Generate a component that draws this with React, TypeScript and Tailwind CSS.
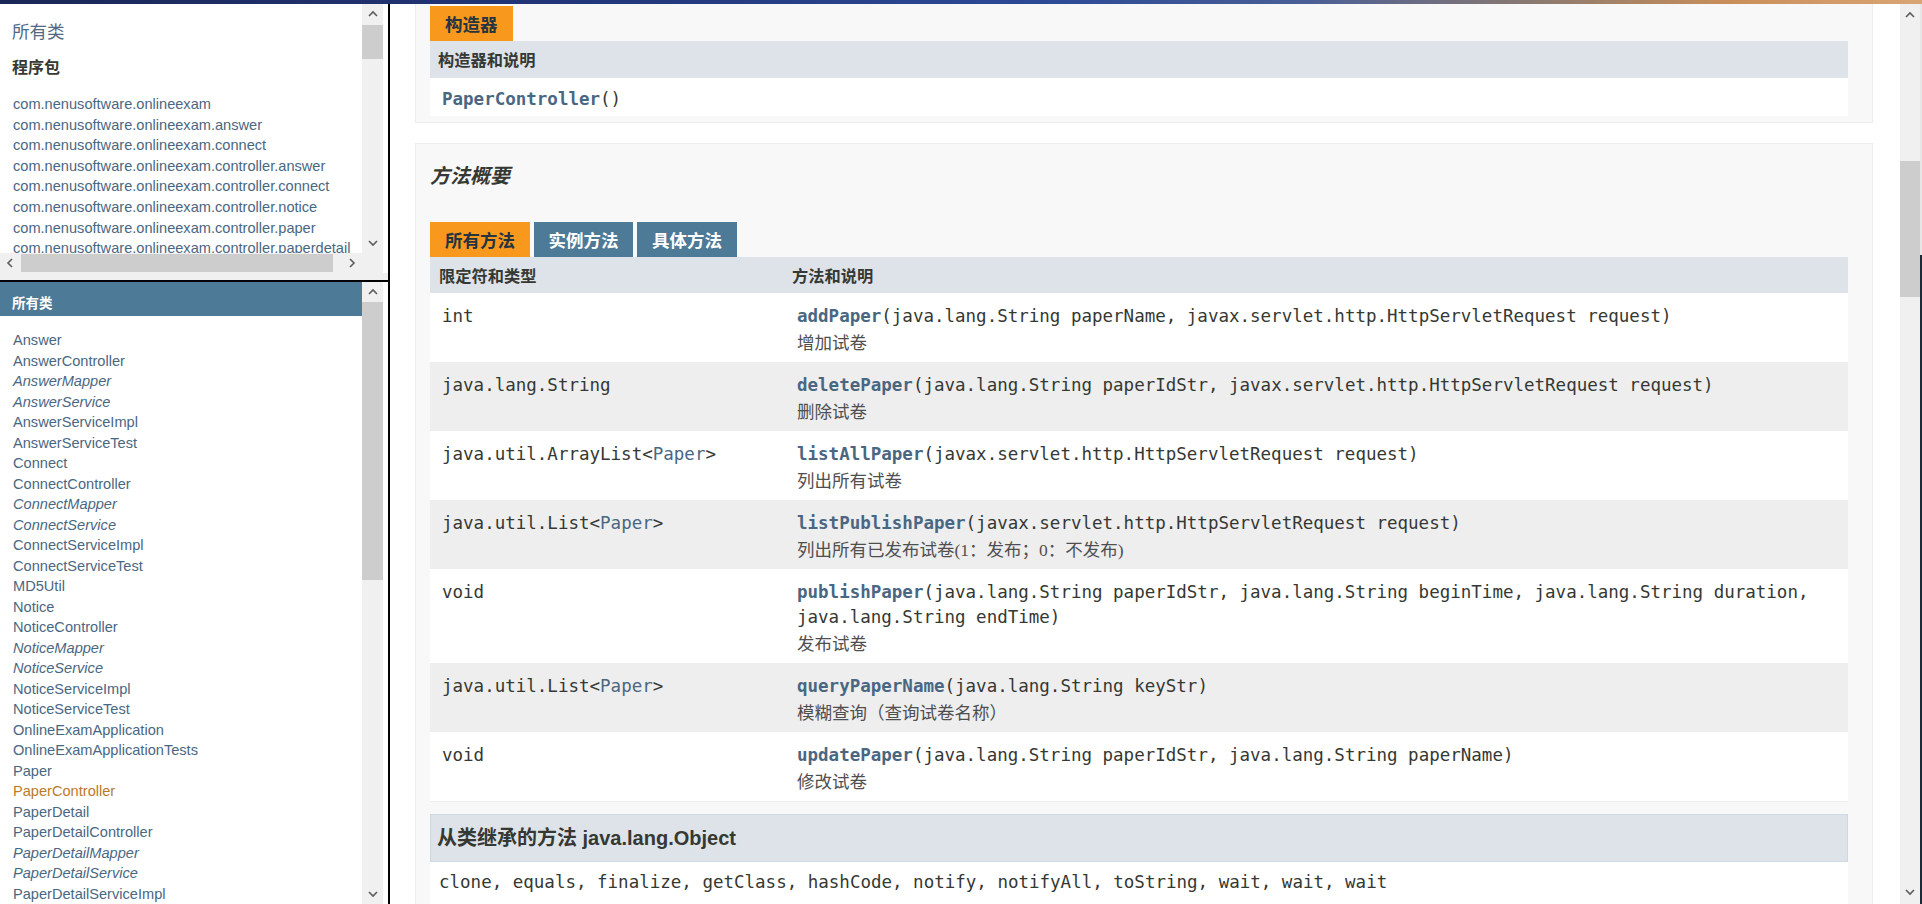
import React from 'react';

const SANS = "font-['Liberation_Sans','Noto_Sans_CJK_SC',sans-serif]";
const CJK = "font-['Noto_Sans_CJK_SC','Liberation_Sans',sans-serif]";
const MONO = "font-['DejaVu_Sans_Mono','Noto_Sans_CJK_SC',monospace]";
const SERIF = "font-['Liberation_Serif','Noto_Sans_CJK_SC',serif]";

type Dir = 'up' | 'down' | 'left' | 'right';

const Chevron: React.FC<{ dir: Dir }> = ({ dir }) => {
  const vertical = dir === 'up' || dir === 'down';
  const d = {
    up: 'M1 6 L5 2 L9 6',
    down: 'M1 2 L5 6 L9 2',
    left: 'M6 1 L2 5 L6 9',
    right: 'M2 1 L6 5 L2 9',
  }[dir];
  return vertical ? (
    <svg width="10" height="8" viewBox="0 0 10 8">
      <path d={d} fill="none" stroke="#5c5c5c" strokeWidth="1.6" />
    </svg>
  ) : (
    <svg width="8" height="10" viewBox="0 0 8 10">
      <path d={d} fill="none" stroke="#5c5c5c" strokeWidth="1.6" />
    </svg>
  );
};

const packages = [
  'com.nenusoftware.onlineexam',
  'com.nenusoftware.onlineexam.answer',
  'com.nenusoftware.onlineexam.connect',
  'com.nenusoftware.onlineexam.controller.answer',
  'com.nenusoftware.onlineexam.controller.connect',
  'com.nenusoftware.onlineexam.controller.notice',
  'com.nenusoftware.onlineexam.controller.paper',
  'com.nenusoftware.onlineexam.controller.paperdetail',
];

// n = class, i = interface (italic), a = active link
const classes: [string, 'n' | 'i' | 'a'][] = [
  ['Answer', 'n'],
  ['AnswerController', 'n'],
  ['AnswerMapper', 'i'],
  ['AnswerService', 'i'],
  ['AnswerServiceImpl', 'n'],
  ['AnswerServiceTest', 'n'],
  ['Connect', 'n'],
  ['ConnectController', 'n'],
  ['ConnectMapper', 'i'],
  ['ConnectService', 'i'],
  ['ConnectServiceImpl', 'n'],
  ['ConnectServiceTest', 'n'],
  ['MD5Util', 'n'],
  ['Notice', 'n'],
  ['NoticeController', 'n'],
  ['NoticeMapper', 'i'],
  ['NoticeService', 'i'],
  ['NoticeServiceImpl', 'n'],
  ['NoticeServiceTest', 'n'],
  ['OnlineExamApplication', 'n'],
  ['OnlineExamApplicationTests', 'n'],
  ['Paper', 'n'],
  ['PaperController', 'a'],
  ['PaperDetail', 'n'],
  ['PaperDetailController', 'n'],
  ['PaperDetailMapper', 'i'],
  ['PaperDetailService', 'i'],
  ['PaperDetailServiceImpl', 'n'],
];

type Method = {
  type: string;
  generic?: boolean;
  name: string;
  lines: string[];
  desc: string;
};

const methods: Method[] = [
  {
    type: 'int',
    name: 'addPaper',
    lines: ['(java.lang.String paperName, javax.servlet.http.HttpServletRequest request)'],
    desc: '增加试卷',
  },
  {
    type: 'java.lang.String',
    name: 'deletePaper',
    lines: ['(java.lang.String paperIdStr, javax.servlet.http.HttpServletRequest request)'],
    desc: '删除试卷',
  },
  {
    type: 'java.util.ArrayList',
    generic: true,
    name: 'listAllPaper',
    lines: ['(javax.servlet.http.HttpServletRequest request)'],
    desc: '列出所有试卷',
  },
  {
    type: 'java.util.List',
    generic: true,
    name: 'listPublishPaper',
    lines: ['(javax.servlet.http.HttpServletRequest request)'],
    desc: '列出所有已发布试卷(1：发布；0：不发布)',
  },
  {
    type: 'void',
    name: 'publishPaper',
    lines: [
      '(java.lang.String paperIdStr, java.lang.String beginTime, java.lang.String duration,',
      'java.lang.String endTime)',
    ],
    desc: '发布试卷',
  },
  {
    type: 'java.util.List',
    generic: true,
    name: 'queryPaperName',
    lines: ['(java.lang.String keyStr)'],
    desc: '模糊查询（查询试卷名称）',
  },
  {
    type: 'void',
    name: 'updatePaper',
    lines: ['(java.lang.String paperIdStr, java.lang.String paperName)'],
    desc: '修改试卷',
  },
];

const LeftFrames: React.FC = () => (
  <div className="flex w-[388px] shrink-0 flex-col">
    {/* package frame */}
    <div className="flex h-[276px] flex-col">
      <div className="flex h-[249px]">
        <div className={`w-[362px] overflow-hidden bg-white pl-[12px] pt-[15px] ${SANS}`}>
          <div className={`text-[17.5px] leading-[24px] text-[#4f6a82] ${CJK}`}>所有类</div>
          <div className={`mt-[12px] text-[16px] font-bold leading-[22px] text-[#353833] ${CJK}`}>程序包</div>
          <ul className="mt-[17px] pl-px">
            {packages.map((p) => (
              <li key={p} className="whitespace-nowrap text-[14.6px] leading-[20.6px] text-[#4A6782]">
                {p}
              </li>
            ))}
          </ul>
        </div>
        <div className="flex w-[21px] flex-col bg-[#f0f0f0]">
          <div className="flex h-[20px] items-center justify-center">
            <Chevron dir="up" />
          </div>
          <div className="mt-px h-[34px] bg-[#cdcdcd]" />
          <div className="flex-1" />
          <div className="flex h-[20px] items-center justify-center">
            <Chevron dir="down" />
          </div>
        </div>
        <div className="w-[5px] bg-white" />
      </div>
      <div className="flex h-[20px]">
        <div className="flex w-[362px] bg-[#f0f0f0]">
          <div className="flex w-[20px] items-center justify-center">
            <Chevron dir="left" />
          </div>
          <div className="my-px ml-px w-[312px] bg-[#cdcdcd]" />
          <div className="flex-1" />
          <div className="flex w-[20px] items-center justify-center">
            <Chevron dir="right" />
          </div>
        </div>
        <div className="w-[21px] bg-[#f0f0f0]" />
        <div className="w-[5px] bg-white" />
      </div>
      <div className="h-[7px] bg-[#f0f0f0]" />
    </div>
    <div className="h-[2px] bg-black" />
    {/* class frame */}
    <div className="flex min-h-0 flex-1">
      <div className={`w-[362px] overflow-hidden bg-white ${SANS}`}>
        <div className={`h-[34px] bg-[#4D7A97] pl-[12px] pt-[10px] text-[13.5px] font-bold leading-[20px] text-white ${CJK}`}>
          所有类
        </div>
        <ul className="pl-[13px] pt-[14px]">
          {classes.map(([c, k]) => (
            <li
              key={c}
              className={`whitespace-nowrap text-[14.6px] leading-[20.5px] ${
                k === 'a' ? 'text-[#bb7a2a]' : 'text-[#4A6782]'
              } ${k === 'i' ? 'italic' : ''}`}
            >
              {c}
            </li>
          ))}
        </ul>
      </div>
      <div className="flex w-[21px] flex-col bg-[#f0f0f0]">
        <div className="flex h-[20px] items-center justify-center">
          <Chevron dir="up" />
        </div>
        <div className="h-[278px] bg-[#cdcdcd]" />
        <div className="flex-1" />
        <div className="flex h-[20px] items-center justify-center">
          <Chevron dir="down" />
        </div>
      </div>
      <div className="w-[5px] bg-white" />
    </div>
  </div>
);

const TypeCell: React.FC<{ m: Method }> = ({ m }) => (
  <div className={`w-[354px] shrink-0 whitespace-pre pl-[12px] text-[17.5px] leading-[25px] text-[#353833] ${MONO}`}>
    {m.generic ? (
      <>
        {m.type}&lt;<span className="text-[#4A6782]">Paper</span>&gt;
      </>
    ) : (
      m.type
    )}
  </div>
);

const MethodRow: React.FC<{ m: Method; alt: boolean }> = ({ m, alt }) => (
  <div className={`flex pb-[5px] pt-[11px] ${alt ? 'bg-[#eeeeef]' : 'bg-white'}`}>
    <TypeCell m={m} />
    <div className="flex-1 pl-[13px]">
      {m.lines.map((l, i) => (
        <div key={i} className={`h-[25px] whitespace-pre text-[17.5px] leading-[25px] text-[#353833] ${MONO}`}>
          {i === 0 && <span className="font-bold text-[#4A6782]">{m.name}</span>}
          {l}
        </div>
      ))}
      <div className={`mt-[3px] h-[25px] whitespace-nowrap text-[17.5px] leading-[23px] text-[#4f4f4f] ${SERIF}`}>
        {m.desc}
      </div>
    </div>
  </div>
);

const RightFrame: React.FC = () => (
  <div className="flex w-[1530px] shrink-0">
    <div className="w-[1510px] overflow-hidden bg-white">
      {/* constructor summary */}
      <div className="ml-[25px] w-[1458px] border-x border-b border-[#ededed] bg-[#f8f8f8] pb-[6px] pl-[14px] pr-[24px] pt-[2px]">
        <div className="flex">
          <span className={`h-[35px] whitespace-nowrap bg-[#F8981D] px-[15px] text-[17.5px] font-bold leading-[35px] text-[#253441] ${CJK}`}>
            构造器
          </span>
        </div>
        <div className={`h-[37px] bg-[#dee3e9] pl-[8px] text-[16.25px] font-bold leading-[37px] text-[#353833] ${CJK}`}>
          构造器和说明
        </div>
        <div className={`h-[38px] bg-white pl-[12px] pt-[4px] text-[17.5px] leading-[34px] text-[#353833] ${MONO}`}>
          <span className="font-bold text-[#4A6782]">PaperController</span>()
        </div>
      </div>

      {/* method summary */}
      <div className="ml-[25px] mt-[20px] w-[1458px] border border-[#ededed] bg-[#f8f8f8] pl-[14px] pr-[24px] pt-[19px]">
        <h3 className={`text-[20px] font-bold italic leading-[24px] text-[#353833] ${CJK}`}>方法概要</h3>
        <div className={`mt-[35px] flex gap-[4px] whitespace-nowrap text-[17.5px] font-bold ${CJK}`}>
          <span className="h-[35px] w-[100px] bg-[#F8981D] text-center leading-[35px] text-[#253441]">所有方法</span>
          <span className="h-[35px] w-[99px] bg-[#4D7A97] text-center leading-[35px] text-white">实例方法</span>
          <span className="h-[35px] w-[100px] bg-[#4D7A97] text-center leading-[35px] text-white">具体方法</span>
        </div>
        <div className={`flex h-[36px] bg-[#dee3e9] text-[16.25px] font-bold leading-[36px] text-[#353833] ${CJK}`}>
          <div className="w-[354px] shrink-0 pl-[9px]">限定符和类型</div>
          <div className="pl-[8px]">方法和说明</div>
        </div>
        <div className="border-b border-[#eeeeee]">
          {methods.map((m, i) => (
            <MethodRow key={m.name} m={m} alt={i % 2 === 1} />
          ))}
        </div>

        {/* inherited */}
        <div className="mt-[12px] bg-white">
          <div className={`h-[48px] border border-[#d0d9e0] bg-[#dee3e9] pl-[6px] text-[20px] font-bold leading-[46px] text-[#353833] ${SANS}`}>
            从类继承的方法 java.lang.Object
          </div>
          <div className={`whitespace-pre pb-[10px] pl-[9px] pt-[8px] text-[17.5px] leading-[24px] text-[#353833] ${MONO}`}>
            clone, equals, finalize, getClass, hashCode, notify, notifyAll, toString, wait, wait, wait
          </div>
        </div>
      </div>
    </div>
    <div className="flex w-[20px] flex-col bg-[#f0f0f0]">
      <div className="flex h-[22px] items-center justify-center">
        <Chevron dir="up" />
      </div>
      <div className="mt-[135px] h-[136px] bg-[#cdcdcd]" />
      <div className="flex-1" />
      <div className="flex h-[16px] items-start justify-center">
        <Chevron dir="down" />
      </div>
    </div>
  </div>
);

const App: React.FC = () => {
  return (
    <div className="flex h-[904px] w-[1922px] flex-col overflow-hidden bg-white">
      <div className="h-[4px] shrink-0 bg-[linear-gradient(90deg,#1a2756_0%,#22367a_30%,#2e4b96_55%,#4a5f96_68%,#8c7a70_80%,#c98f5a_90%,#d9a574_100%)]" />
      <div className="flex min-h-0 flex-1">
        <LeftFrames />
        <div className="w-[2px] shrink-0 bg-black" />
        <RightFrame />
        <div className="flex w-[2px] shrink-0 flex-col">
          <div className="h-[251px] bg-[#e6e6e6]" />
          <div className="flex-1 bg-[#1c2a38]" />
        </div>
      </div>
    </div>
  );
};

export default App;
